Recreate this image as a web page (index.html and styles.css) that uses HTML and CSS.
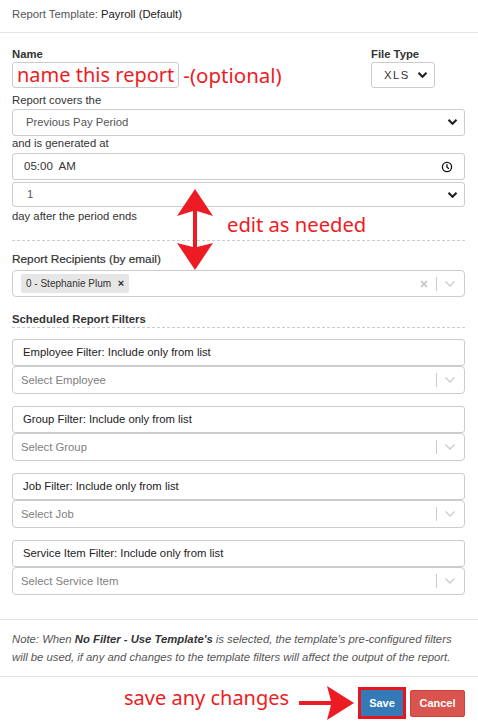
FILE: index.html
```html
<!DOCTYPE html>
<html lang="en">
<head>
  <meta charset="UTF-8" />
  <title>Scheduled Report</title>
  <link rel="stylesheet" href="styles.css">
</head>
<body>
  <div class="modal">
    <div class="modal-header">Report Template: <span class="tpl">Payroll (Default)</span></div>

    <div class="modal-body">
      <div class="top-row">
        <div class="name-col">
          <label class="lbl">Name</label>
          <div class="name-line">
            <div class="name-box">name this report</div>
            <span class="note-red">-(optional)</span>
          </div>
        </div>
        <div class="type-col">
          <label class="lbl">File Type</label>
          <div class="select small">
            <span class="xls">XLS</span>
            <svg class="chev" width="11" height="8" viewBox="0 0 11 8"><path d="M1.5 1.8 L5.5 5.8 L9.5 1.8" fill="none" stroke="#222" stroke-width="2.2"/></svg>
          </div>
        </div>
      </div>

      <div class="plain first">Report covers the</div>
      <div class="select">
        <span class="val pad">Previous Pay Period</span>
        <svg class="chev" width="11" height="8" viewBox="0 0 11 8"><path d="M1.5 1.8 L5.5 5.8 L9.5 1.8" fill="none" stroke="#222" stroke-width="2.2"/></svg>
      </div>

      <div class="plain">and is generated at</div>
      <div class="select time">
        <span class="val pad-t">05:00&nbsp; AM</span>
        <svg class="clock" width="12" height="12" viewBox="0 0 12 12"><circle cx="6" cy="6" r="4.6" fill="none" stroke="#111" stroke-width="1.3"/><path d="M6 3.2 V6.2 L8 7.8" fill="none" stroke="#111" stroke-width="1.3"/></svg>
      </div>
      <div class="select days">
        <span class="val pad-d">1</span>
        <svg class="chev" width="11" height="8" viewBox="0 0 11 8"><path d="M1.5 1.8 L5.5 5.8 L9.5 1.8" fill="none" stroke="#222" stroke-width="2.2"/></svg>
      </div>
      <div class="plain after">day after the period ends</div>

      <hr class="dash">

      <label class="lbl rec">Report Recipients (by email)</label>
      <div class="rselect multi">
        <span class="chip">0 - Stephanie Plum <b>&times;</b></span>
        <span class="ind">
          <svg width="10" height="10" viewBox="0 0 10 10"><path d="M2 2 L8 8 M8 2 L2 8" stroke="#ccc" stroke-width="2"/></svg>
          <i class="sep"></i>
          <svg width="12" height="8" viewBox="0 0 12 8"><path d="M1.5 1.5 L6 6 L10.5 1.5" fill="none" stroke="#ccc" stroke-width="1.4"/></svg>
        </span>
      </div>

      <div class="lbl sched">Scheduled Report Filters</div>
      <hr class="dash tight">

      <div class="filter">
        <div class="ftype">Employee Filter: Include only from list</div>
        <div class="rselect"><span class="ph">Select Employee</span>
          <span class="ind"><i class="sep"></i><svg width="12" height="8" viewBox="0 0 12 8"><path d="M1.5 1.5 L6 6 L10.5 1.5" fill="none" stroke="#ccc" stroke-width="1.4"/></svg></span></div>
      </div>
      <div class="filter">
        <div class="ftype">Group Filter: Include only from list</div>
        <div class="rselect"><span class="ph">Select Group</span>
          <span class="ind"><i class="sep"></i><svg width="12" height="8" viewBox="0 0 12 8"><path d="M1.5 1.5 L6 6 L10.5 1.5" fill="none" stroke="#ccc" stroke-width="1.4"/></svg></span></div>
      </div>
      <div class="filter">
        <div class="ftype">Job Filter: Include only from list</div>
        <div class="rselect"><span class="ph">Select Job</span>
          <span class="ind"><i class="sep"></i><svg width="12" height="8" viewBox="0 0 12 8"><path d="M1.5 1.5 L6 6 L10.5 1.5" fill="none" stroke="#ccc" stroke-width="1.4"/></svg></span></div>
      </div>
      <div class="filter">
        <div class="ftype">Service Item Filter: Include only from list</div>
        <div class="rselect"><span class="ph">Select Service Item</span>
          <span class="ind"><i class="sep"></i><svg width="12" height="8" viewBox="0 0 12 8"><path d="M1.5 1.5 L6 6 L10.5 1.5" fill="none" stroke="#ccc" stroke-width="1.4"/></svg></span></div>
      </div>
    </div>

    <div class="modal-note">
      Note: When <b>No Filter - Use Template's</b> is selected, the template's pre-configured filters will be used, if any and changes to the template filters will affect the output of the report.
    </div>

    <div class="modal-footer">
      <span class="save-wrap"><button class="btn save">Save</button></span>
      <button class="btn cancel">Cancel</button>
    </div>

    <!-- annotations drawn over the screenshot -->
    <div class="anno edit-text">edit as needed</div>
    <svg class="anno dbl-arrow" width="40" height="82" viewBox="0 0 40 82">
      <polygon fill="#ed1c24" points="19,0 37,27 21,22 21,58 37,54 19,81 1,54 17,58 17,22 1,27"/>
    </svg>
    <div class="anno save-text">save any changes</div>
    <svg class="anno r-arrow" width="56" height="34" viewBox="0 0 56 34">
      <polygon fill="#ed1c24" points="0,15 32,15 28,0 55,17 28,34 32,19 0,19"/>
    </svg>
  </div>
</body>
</html>
```

FILE: styles.css
```css
body {
  margin: 0;
  font-family: "Liberation Sans", Arial, sans-serif;
  font-size: 11.3px;
  color: #333;
  background: #fff;
}
.modal {
  position: relative;
  width: 478px;
  height: 726px;
}
.modal-header {
  height: 33px;
  box-sizing: border-box;
  padding: 8px 12px 0;
  border-bottom: 1px solid #e5e5e5;
  line-height: 13px;
  color: #555;
}
.tpl {
  color: #222;
}
.modal-body {
  padding: 15px 13px 24px 12px;
  border-bottom: 1px solid #e5e5e5;
}
.lbl {
  display: block;
  font-weight: bold;
  line-height: 13px;
  margin-bottom: 1px;
}
.top-row {
  display: flex;
  justify-content: space-between;
}
.name-line {
  display: flex;
  align-items: center;
  height: 26px;
}
.name-box {
  height: 26px;
  box-sizing: border-box;
  border: 1px solid #ccc;
  border-radius: 3px;
  padding: 0 4px;
  font-family: "Noto Sans", "Open Sans", sans-serif;
  font-size: 20px;
  line-height: 24px;
  color: #ed1c24;
}
.note-red {
  margin-left: 4px;
  font-family: "Noto Sans", "Open Sans", sans-serif;
  font-size: 20.5px;
  line-height: 24px;
  color: #ed1c24;
}
.type-col {
  width: 94px;
}
.select {
  position: relative;
  display: flex;
  align-items: center;
  height: 27px;
  box-sizing: border-box;
  border: 1px solid #ccc;
  border-radius: 3px;
  color: #555;
}
.select.small {
  width: 64px;
  height: 26px;
}
.xls {
  margin-left: 12px;
  letter-spacing: 1.5px;
  color: #333;
}
.chev {
  position: absolute;
  right: 6px;
  top: 8px;
}
.clock {
  position: absolute;
  right: 11px;
  top: 7px;
}
.val {
  line-height: 13px;
}
.pad { margin-left: 13px; }
.pad-t { margin-left: 11px; color: #333; font-size: 11.5px; }
.pad-d { margin-left: 14px; }
.select.time {
  height: 27px;
  margin-top: 3px;
}
.select.days {
  height: 25px;
  margin-top: 2px;
}
.plain {
  line-height: 13px;
  margin: 1px 0 2px;
}
.plain.first {
  margin-top: 6px;
}
.plain.after {
  margin-top: 3px;
}
hr.dash {
  border: 0;
  border-top: 1px dashed #ccc;
  margin: 17px 0 12px;
}
hr.dash.tight {
  margin: 1px 0 11px;
}
.lbl.rec {
  font-weight: normal;
  font-size: 11.8px;
  margin-bottom: 4px;
  -webkit-text-stroke: 0.2px #333;
}
.rselect {
  position: relative;
  display: flex;
  align-items: center;
  height: 28px;
  box-sizing: border-box;
  border: 1px solid #ccc;
  border-radius: 4px;
  padding-left: 8px;
}
.rselect.multi {
  height: 27px;
  padding-left: 8px;
  margin-bottom: 16px;
}
.chip {
  background: #e6e6e6;
  border-radius: 2px;
  height: 19px;
  line-height: 19px;
  padding: 0 5px;
  font-size: 10px;
  color: #333;
}
.chip b {
  margin-left: 4px;
  font-size: 11px;
}
.ind {
  position: absolute;
  right: 8px;
  top: 0;
  bottom: 0;
  display: flex;
  align-items: center;
  gap: 7px;
}
.sep {
  display: block;
  width: 1px;
  height: 14px;
  background: #ccc;
}
.ph {
  color: #808080;
}
.lbl.sched {
  margin-bottom: 0;
}
.filter {
  margin-bottom: 12px;
}
.filter:last-child {
  margin-bottom: 0;
}
.ftype {
  height: 27px;
  box-sizing: border-box;
  border: 1px solid #ccc;
  border-radius: 3px;
  padding-left: 10px;
  line-height: 25px;
  color: #222;
}
.modal-note {
  padding: 10px 13px 10px 12px;
  line-height: 18px;
  font-style: italic;
  color: #555;
  border-bottom: 1px solid #e5e5e5;
}
.modal-note b {
  color: #333;
}
.modal-footer {
  display: flex;
  justify-content: flex-end;
  align-items: center;
  gap: 4px;
  padding: 10px 13px 0 0;
}
.save-wrap {
  border: 3px solid #e8141e;
  display: flex;
}
.btn {
  border: 0;
  border-radius: 2px;
  color: #fff;
  font-family: "Liberation Sans", Arial, sans-serif;
  font-weight: bold;
  font-size: 11px;
  height: 26px;
  cursor: pointer;
}
.save {
  background: #337ab7;
  width: 42px;
  border-radius: 0;
}
.cancel {
  background: #d9534f;
  width: 55px;
  height: 27px;
  border: 1px solid #d43f3a;
}
.anno {
  position: absolute;
}
.edit-text {
  left: 227px;
  top: 210px;
  font-family: "Noto Sans", "Open Sans", sans-serif;
  font-size: 20.2px;
  color: #ed1c24;
}
.dbl-arrow {
  left: 176px;
  top: 189px;
}
.save-text {
  left: 124px;
  top: 684px;
  font-family: "Noto Sans", "Open Sans", sans-serif;
  font-size: 20px;
  color: #ed1c24;
}
.r-arrow {
  left: 299px;
  top: 686px;
}
```
